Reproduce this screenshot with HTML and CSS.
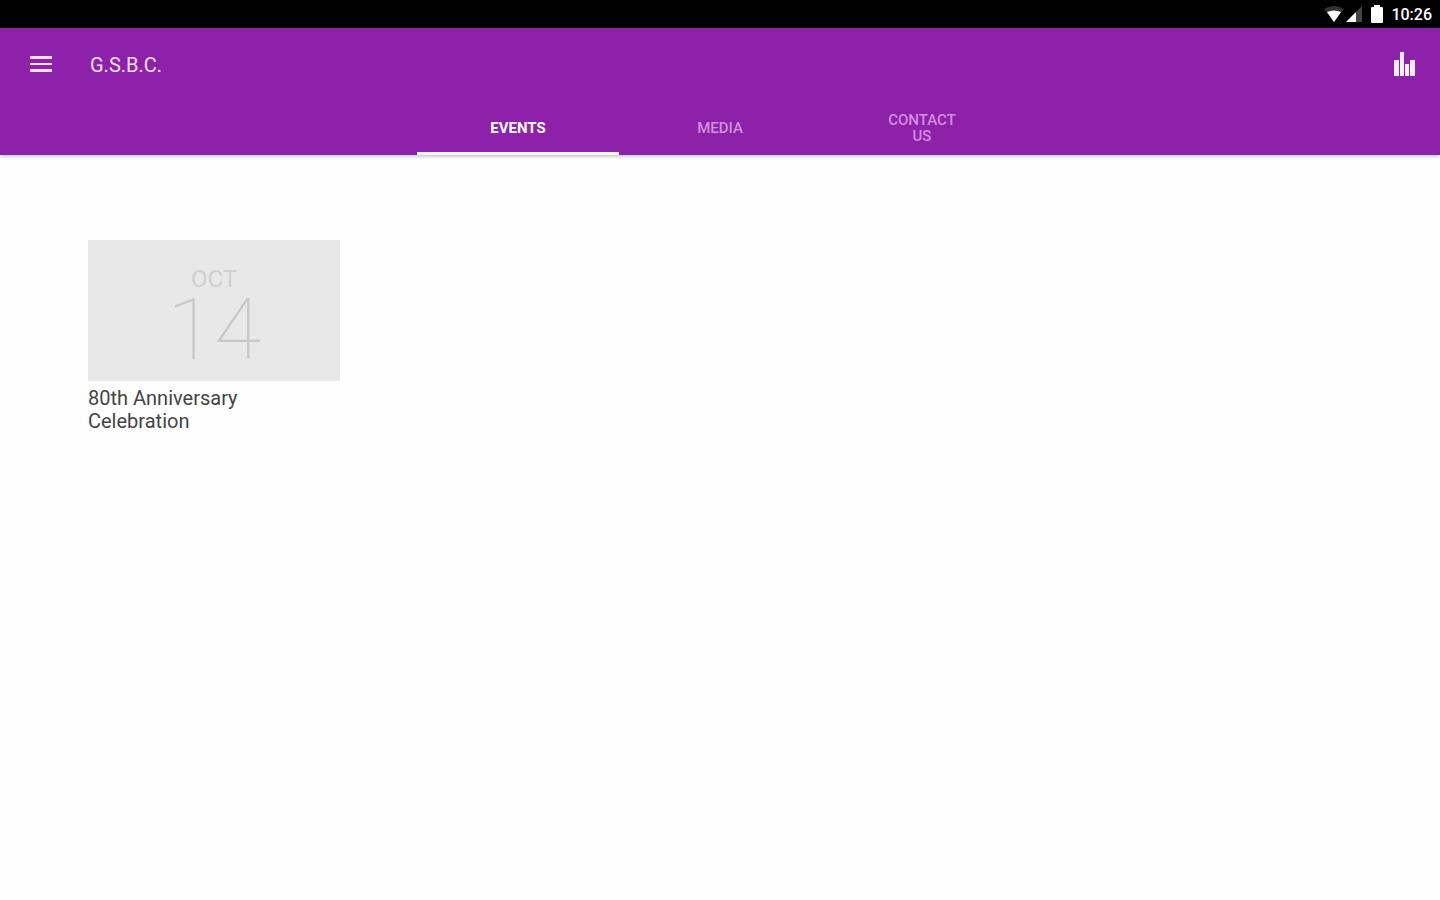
FILE: index.html
```html
<!DOCTYPE html>
<html lang="en">
<head>
    <meta charset="UTF-8">
    <meta name="viewport" content="width=device-width, initial-scale=1.0">
    <title>G.S.B.C.</title>
    <link rel="stylesheet" href="styles.css">
</head>
<body>
    <div class="status-bar">
        <svg class="wifi" width="20" height="16" viewBox="0 0 20 16">
            <path d="M0 3Q10 -3 20 3L10 16Z" fill="#333"/>
            <path d="M3 6Q10 3 17 6L10 16Z" fill="#fff"/>
        </svg>
        <svg class="signal" width="16" height="16" viewBox="0 0 16 16">
            <path d="M16 0V16H0Z" fill="#444"/>
            <path d="M10 6V16H0Z" fill="#fff"/>
        </svg>
        <svg class="battery" width="12" height="18" viewBox="0 0 12 18">
            <path d="M3 0H9V2H11Q12 2 12 3V17Q12 18 11 18H1Q0 18 0 17V3Q0 2 1 2H3Z" fill="#fff"/>
        </svg>
        <span class="clock">10:26</span>
    </div>

    <header class="app-bar">
        <div class="toolbar">
            <button type="button" class="icon-button" aria-label="Menu">
                <svg width="22" height="18" viewBox="0 0 22 18">
                    <path d="M0 0H22V3H0ZM0 7H22V9H0ZM0 13H22V16H0Z" fill="#f3e0f7"/>
                </svg>
            </button>
            <h1>G.S.B.C.</h1>
            <button type="button" class="icon-button" aria-label="Now playing">
                <svg width="22" height="26" viewBox="0 0 22 26">
                    <path d="M0 8H5V24H0ZM6 0H10V24H6ZM11 12H15V24H11ZM16 8H21V24H16Z" fill="#f8ecfa"/>
                </svg>
            </button>
        </div>
        <nav class="tabs">
            <a href="#events" class="tab active">EVENTS</a>
            <a href="#media" class="tab">MEDIA</a>
            <a href="#contact" class="tab">CONTACT US</a>
        </nav>
    </header>

    <main id="events">
        <a href="#anniversary" class="event">
            <div class="date">
                <span class="month">OCT</span>
                <span class="day">14</span>
            </div>
            <h2>80th Anniversary Celebration</h2>
        </a>
    </main>
</body>
</html>
```
FILE: styles.css
```css
body {
    margin: 0;
    background-color: #fefefe;
    font-family: Roboto, sans-serif;
}

.status-bar {
    display: flex;
    align-items: center;
    justify-content: flex-end;
    height: 28px;
    padding-right: 8px;
    background-color: #000;
    color: #fff;
}

.signal {
    margin: 0 9px 0 2px;
}

.clock {
    margin-left: 8px;
    font-size: 16px;
    font-weight: 500;
}

.app-bar {
    background-color: #8e21a9;
    box-shadow: 0 1px 4px rgba(0, 0, 0, 0.3);
}

.toolbar {
    display: flex;
    align-items: center;
    height: 74px;
    padding: 0 24px 0 30px;
}

.icon-button {
    display: flex;
    padding: 0;
    border: none;
    background: none;
    cursor: pointer;
}

h1 {
    flex: 1;
    margin: 0 0 0 38px;
    color: #f3e0f7;
    font-size: 20px;
    font-weight: 400;
}

.tabs {
    display: flex;
    justify-content: center;
}

.tab {
    display: flex;
    align-items: center;
    justify-content: center;
    box-sizing: border-box;
    width: 202px;
    height: 53px;
    padding: 1px 60px 0;
    border-bottom: 3px solid transparent;
    color: #d08fdf;
    font-size: 15px;
    font-weight: 500;
    line-height: 16px;
    text-align: center;
    text-decoration: none;
}

.tab.active {
    border-color: #f4f4ee;
    color: #fff;
    font-weight: 700;
}

main {
    padding: 85px 88px;
}

.event {
    display: block;
    width: 252px;
    color: #444;
    text-decoration: none;
}

.date {
    display: flex;
    flex-direction: column;
    align-items: center;
    box-sizing: border-box;
    height: 141px;
    padding-top: 26px;
    background-color: #e8e8e8;
    color: #d0d0d0;
}

.month {
    font-size: 24px;
    line-height: 26px;
}

.day {
    font-size: 86px;
    font-weight: 100;
    line-height: 76px;
    color: #c8c8c8;
}

h2 {
    width: 200px;
    margin: 6px 0 0;
    font-size: 20px;
    font-weight: 400;
    line-height: 23px;
}
```
